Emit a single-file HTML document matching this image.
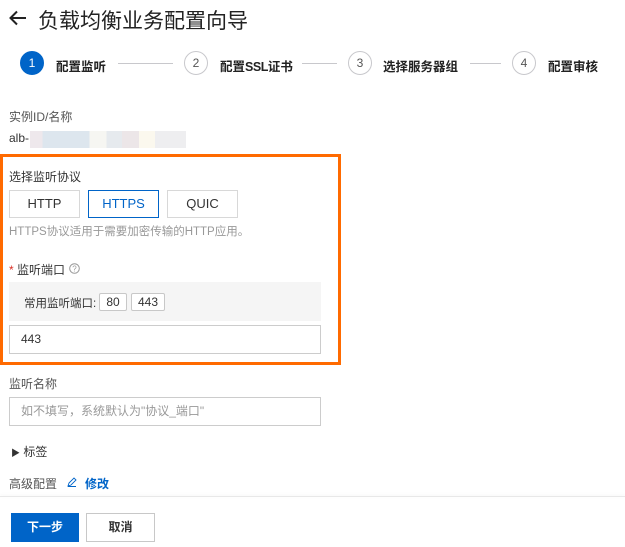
<!DOCTYPE html>
<html><head><meta charset="utf-8"><style>
*{margin:0;padding:0;box-sizing:border-box}
body{width:625px;height:547px;background:#fff;font-family:"Liberation Sans","Noto Sans CJK SC",sans-serif;color:#333;position:relative;overflow:hidden;font-size:12px}
.a{position:absolute;white-space:nowrap}
.c{position:absolute;width:24px;height:24px;border-radius:50%;border:1px solid #c8c8cc;color:#555;font-size:12px;text-align:center;line-height:22px;top:51px}
.sl{position:absolute;font-size:12.5px;font-weight:bold;color:#222;top:56px}
.ln{position:absolute;height:1px;background:#c8c8cc;top:63px}
.btn{position:absolute;top:190px;width:71px;height:28px;border:1px solid #d8d8d8;text-align:center;line-height:26px;font-size:13px;color:#333}
.in{position:absolute;left:9px;width:312px;height:29px;border:1px solid #ccc;padding-left:11px;line-height:27px;font-size:12px}
.tag{position:absolute;top:293px;height:18px;border:1px solid #c8c8c8;border-radius:2px;background:#fff;text-align:center;line-height:16px;font-size:12px}
</style></head><body>
<svg class="a" style="left:8px;top:9px" width="20" height="18" viewBox="0 0 20 18"><path d="M18 9H3M9 2.5L2.5 9 9 15.5" fill="none" stroke="#222" stroke-width="2"/></svg>
<div class="a" style="left:38px;top:5px;font-size:21px;color:#222">负载均衡业务配置向导</div>

<div class="c" style="left:20px;background:#0064c8;border-color:#0064c8;color:#fff">1</div>
<div class="sl" style="left:56px">配置监听</div>
<div class="ln" style="left:118px;width:55px"></div>
<div class="c" style="left:184px">2</div>
<div class="sl" style="left:220px">配置<span style="letter-spacing:-0.5px">SSL</span>证书</div>
<div class="ln" style="left:302px;width:35px"></div>
<div class="c" style="left:348px">3</div>
<div class="sl" style="left:383px">选择服务器组</div>
<div class="ln" style="left:470px;width:31px"></div>
<div class="c" style="left:512px">4</div>
<div class="sl" style="left:548px">配置审核</div>

<div class="a" style="left:9px;top:108px;color:#555">实例ID/名称</div>
<div class="a" style="left:9px;top:131px;color:#333">alb-</div>
<div class="a" style="left:30px;top:131px;width:156px;height:17px;background:linear-gradient(90deg,#eee8ec 0 8%,#dde6ee 8% 38%,#f6f6f2 38% 49%,#e6eaee 49% 59%,#ece6e8 59% 70%,#fbf8ee 70% 80%,#eeeef0 80%)"></div>

<div class="a" style="left:0;top:154px;width:341px;height:211px;border:3px solid #ff6a00"></div>
<div class="a" style="left:9px;top:168px;color:#333">选择监听协议</div>
<div class="btn" style="left:9px">HTTP</div>
<div class="btn" style="left:88px;border-color:#0064c8;color:#0064c8">HTTPS</div>
<div class="btn" style="left:167px">QUIC</div>
<div class="a" style="left:9px;top:223px;color:#999;font-size:11.5px">HTTPS协议适用于需要加密传输的HTTP应用。</div>
<div class="a" style="left:9px;top:261px;color:#333"><span style="color:#d93026">*</span> 监听端口</div>
<svg class="a" style="left:69px;top:263px" width="11" height="11" viewBox="0 0 11 11"><circle cx="5.5" cy="5.5" r="4.8" fill="none" stroke="#999"/><text x="5.5" y="8.5" font-size="8" text-anchor="middle" fill="#999" font-family="Liberation Sans">?</text></svg>
<div class="a" style="left:9px;top:282px;width:312px;height:39px;background:#f5f5f5"></div>
<div class="a" style="left:24px;top:295px;color:#333;font-size:11.5px">常用监听端口:</div>
<div class="tag" style="left:99px;width:28px">80</div>
<div class="tag" style="left:131px;width:34px">443</div>
<div class="in" style="top:325px;color:#333">443</div>

<div class="a" style="left:9px;top:375px;color:#555">监听名称</div>
<div class="in" style="top:397px;color:#999">如不填写，系统默认为"协议_端口"</div>
<div class="a" style="left:11px;top:443px;font-size:12px;color:#333"><span style="font-size:9px">▶</span> 标签</div>
<div class="a" style="left:9px;top:475px;color:#555">高级配置</div>
<svg class="a" style="left:67px;top:477px" width="10" height="10" viewBox="0 0 10 10"><path d="M1 9l1-3 5-5 2 2-5 5zM1 9.5h8" fill="none" stroke="#0064c8" stroke-width="0.9"/></svg>
<div class="a" style="left:85px;top:475px;color:#0064c8;font-weight:bold">修改</div>
<div class="a" style="left:0;top:496px;width:625px;height:1px;background:#e8e8e8;box-shadow:0 -1px 3px #eee"></div>
<div class="a" style="left:11px;top:513px;width:68px;height:29px;background:#0064c8;color:#fff;font-weight:bold;text-align:center;line-height:29px">下一步</div>
<div class="a" style="left:86px;top:513px;width:69px;height:29px;border:1px solid #c8c8c8;color:#333;font-weight:bold;text-align:center;line-height:27px">取消</div>
</body></html>
